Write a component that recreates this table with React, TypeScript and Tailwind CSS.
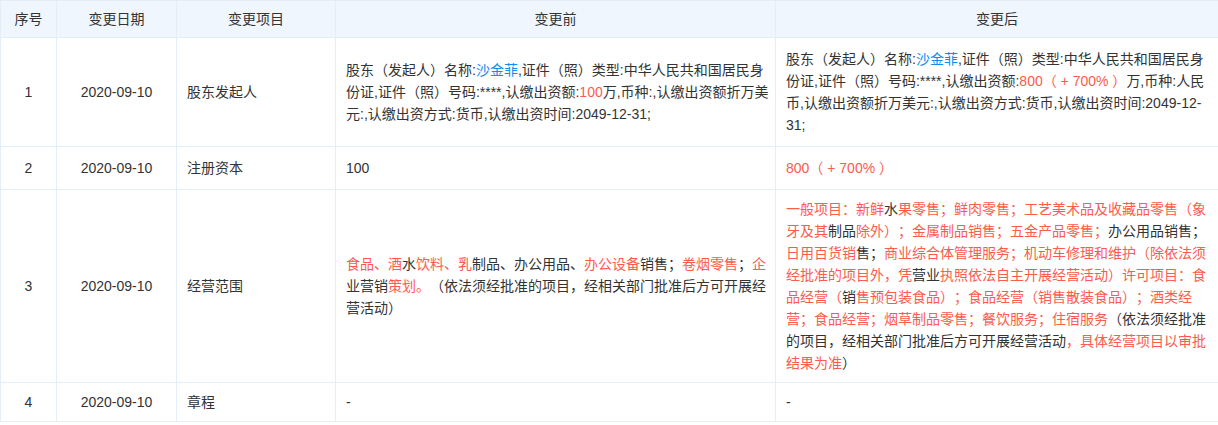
import React from "react";

const R = ({ children }: { children: React.ReactNode }) => (
  <span className="text-[#fd5b4d]">{children}</span>
);
const B = ({ children }: { children: React.ReactNode }) => (
  <span className="text-[#128bed]">{children}</span>
);

const td = "border border-[#e4eef6] px-[10px] align-middle";
const nw = "whitespace-nowrap";

export default function App() {
  return (
    <div
      className="bg-white text-[14px] text-[#333] w-[1218px] [text-spacing-trim:space-all]"
      style={{ fontFamily: '"Liberation Sans", "Noto Sans CJK SC", sans-serif' }}
    >
      <table className="table-fixed border-collapse w-[1218px]">
        <colgroup>
          <col className="w-[56px]" />
          <col className="w-[120px]" />
          <col className="w-[159px]" />
          <col className="w-[440px]" />
          <col className="w-[443px]" />
        </colgroup>
        <thead>
          <tr className="bg-[#eff6fd] leading-[18px]">
            <th className={`${td} py-[9px] font-normal text-center`}>序号</th>
            <th className={`${td} py-[9px] font-normal text-center`}>变更日期</th>
            <th className={`${td} py-[9px] font-normal text-center`}>变更项目</th>
            <th className={`${td} py-[9px] font-normal text-center`}>变更前</th>
            <th className={`${td} py-[9px] font-normal text-center`}>变更后</th>
          </tr>
        </thead>
        <tbody className="leading-[22px]">
          <tr>
            <td className={`${td} py-[10px] text-center`}>1</td>
            <td className={`${td} py-[10px] text-center`}>2020-09-10</td>
            <td className={`${td} py-[10px]`}>股东发起人</td>
            <td className={`${td} ${nw} py-[10px]`}>
              股东（发起人）名称:<B>沙金菲</B>,证件（照）类型:中华人民共和国居民身
              <br />
              份证,证件（照）号码:****,认缴出资额:<R>100</R>万,币种:,认缴出资额折万美
              <br />
              元:,认缴出资方式:货币,认缴出资时间:2049-12-31;
            </td>
            <td className={`${td} ${nw} py-[10px]`}>
              股东（发起人）名称:<B>沙金菲</B>,证件（照）类型:中华人民共和国居民身
              <br />
              份证,证件（照）号码:****,认缴出资额:<R>800（ + 700% ）</R>万,币种:人民
              <br />
              币,认缴出资额折万美元:,认缴出资方式:货币,认缴出资时间:2049-12-
              <br />
              31;
            </td>
          </tr>
          <tr>
            <td className={`${td} py-[10px] text-center`}>2</td>
            <td className={`${td} py-[10px] text-center`}>2020-09-10</td>
            <td className={`${td} py-[10px]`}>注册资本</td>
            <td className={`${td} py-[10px]`}>100</td>
            <td className={`${td} py-[10px]`}>
              <R>800（ + 700% ）</R>
            </td>
          </tr>
          <tr>
            <td className={`${td} py-[8px] text-center`}>3</td>
            <td className={`${td} py-[8px] text-center`}>2020-09-10</td>
            <td className={`${td} py-[8px]`}>经营范围</td>
            <td className={`${td} ${nw} py-[8px]`}>
              <R>食品、酒</R>水<R>饮料、乳</R>制品、办公用品、<R>办公设备</R>销售；<R>卷烟零售</R>；<R>企</R>
              <br />
              业营销<R>策划。</R>（依法须经批准的项目，经相关部门批准后方可开展经
              <br />
              营活动）
            </td>
            <td className={`${td} ${nw} py-[8px]`}>
              <R>一般项目：新鲜</R>水<R>果零售；鲜肉零售；工艺美术品及收藏品零售（象</R>
              <br />
              <R>牙及其</R>制品<R>除外）；金属制品销售；五金产品零售；</R>办公用品销售；
              <br />
              <R>日用百货销</R>售；<R>商业综合体管理服务；机动车修理和维护（除依法须</R>
              <br />
              <R>经批准的项目外，凭</R>营业<R>执照依法自主开展经营活动）许可项目：食</R>
              <br />
              <R>品经营（</R>销<R>售预包装食品）；食品经营（销售散装食品）；酒类经</R>
              <br />
              <R>营；食品经营；烟草制品零售；餐饮服务；住宿服务</R>（依法须经批准
              <br />
              的项目，经相关部门批准后方可开展经营活动<R>，具体经营项目以审批</R>
              <br />
              <R>结果为准</R>）
            </td>
          </tr>
          <tr className="leading-[18px]">
            <td className={`${td} py-[10px] text-center`}>4</td>
            <td className={`${td} py-[10px] text-center`}>2020-09-10</td>
            <td className={`${td} py-[10px]`}>章程</td>
            <td className={`${td} py-[10px]`}>-</td>
            <td className={`${td} py-[10px]`}>-</td>
          </tr>
        </tbody>
      </table>
    </div>
  );
}
